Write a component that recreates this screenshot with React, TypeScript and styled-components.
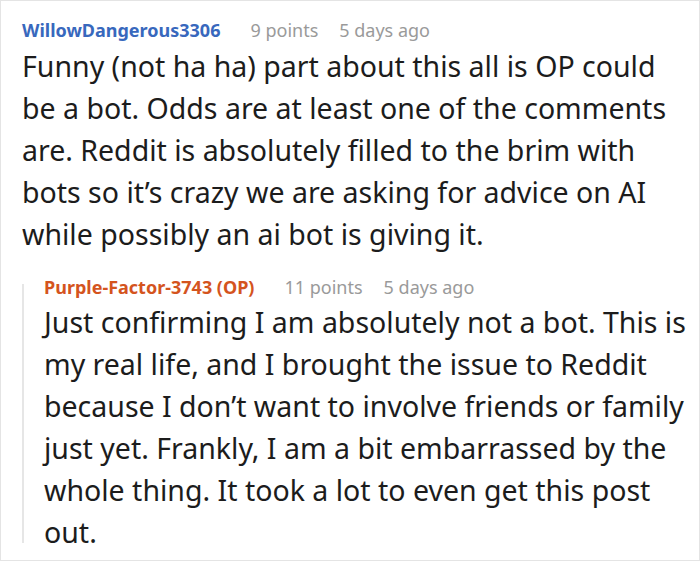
import React from "react";
import styled, { createGlobalStyle } from "styled-components";

const Global = createGlobalStyle`
  html, body { margin: 0; padding: 0; background: #fff; }
  body { font-family: "Noto Sans", "Open Sans", sans-serif; }
`;

const Card = styled.div`
  box-sizing: border-box;
  width: 700px;
  height: 561px;
  border: 1px solid #e4e4e4;
  background: #fff;
  padding: 17px 0 0 21px;
  overflow: hidden;
`;

const Meta = styled.div`
  display: flex;
  align-items: baseline;
  gap: 21px;
  height: 24px;
  font-size: 18px;
  line-height: 24px;
  white-space: nowrap;
`;

const Author = styled.span<{ $color: string }>`
  font-weight: 700;
  color: ${(p) => p.$color};
  margin-right: 9px;
`;

const Info = styled.span`
  color: #9a9a9a;
`;

const Body = styled.p`
  margin: 2.5px 0 0;
  width: 656px;
  font-size: 28.5px;
  line-height: 42px;
  color: #1c1c1c;
`;

const Reply = styled.div`
  margin-top: 20px;
  padding-left: 22px;
  background: linear-gradient(#e6e6e6, #e6e6e6) no-repeat 0 9px / 2px calc(100% - 19px);
`;

type CommentProps = { author: string; color: string; points: string; time: string; text: string };

const Comment: React.FC<CommentProps> = ({ author, color, points, time, text }) => (
  <>
    <Meta>
      <Author $color={color}>{author}</Author>
      <Info>{points}</Info>
      <Info>{time}</Info>
    </Meta>
    <Body>{text}</Body>
  </>
);

export default function App() {
  return (
    <>
      <Global />
      <Card>
        <Comment
          author="WillowDangerous3306"
          color="#3868bd"
          points="9 points"
          time="5 days ago"
          text="Funny (not ha ha) part about this all is OP could be a bot. Odds are at least one of the comments are. Reddit is absolutely filled to the brim with bots so it’s crazy we are asking for advice on AI while possibly an ai bot is giving it."
        />
        <Reply>
          <Comment
            author="Purple-Factor-3743 (OP)"
            color="#d4541e"
            points="11 points"
            time="5 days ago"
            text="Just confirming I am absolutely not a bot. This is my real life, and I brought the issue to Reddit because I don’t want to involve friends or family just yet. Frankly, I am a bit embarrassed by the whole thing. It took a lot to even get this post out."
          />
        </Reply>
      </Card>
    </>
  );
}
